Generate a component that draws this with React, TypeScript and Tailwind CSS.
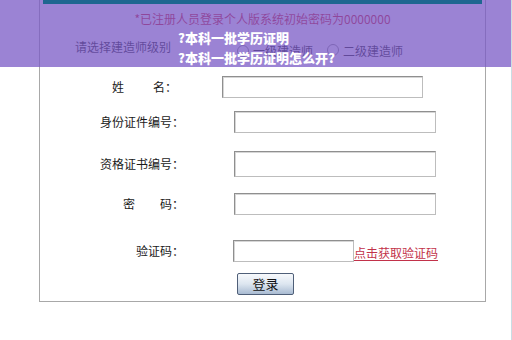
const font = "font-['Noto_Sans_CJK_SC','Noto_Sans_CJK_SC',sans-serif]"

function Field({ className }: { className: string }) {
  return (
    <div
      className={`h-[22px] border border-[#8f8f8f] border-r-[#bdbdbd] border-b-[#bdbdbd] bg-white shadow-[inset_1px_1px_0_#d6d6d6] ${className}`}
    />
  )
}

function Radio() {
  return (
    <span className="inline-block h-[12px] w-[12px] rounded-full border border-[#8a8a8a] bg-white" />
  )
}

export default function App() {
  return (
    <div
      className={`relative h-[340px] w-[512px] overflow-hidden border-r border-[#c9dde4] bg-white text-[12px] leading-[16px] text-[#1a1a1a] ${font}`}
    >
      <div className="flex">
        <div className="w-[39px] shrink-0" />
        <div className="flex h-[302px] w-[447px] shrink-0 flex-col border-x border-b border-[#a8a8a8]">
          <div className="relative z-20 mx-[3px] h-[4px] bg-[#1f6690]" />

          <p className="mt-[7px] text-center text-[#d0101c]">
            *已注册人员登录个人版系统初始密码为0000000
          </p>

          <div className="mt-[12px] flex items-start">
            <span className="ml-[35px]">请选择建造师级别</span>
            <div className="ml-[66px] mt-[4px] flex items-center">
              <Radio />
              <span className="ml-[4px]">一级建造师</span>
              <span className="ml-[14px]">
                <Radio />
              </span>
              <span className="ml-[4px]">二级建造师</span>
            </div>
          </div>

          <div className="mt-[17px] flex h-[22px] items-center">
            <span className="w-[137px] text-right">
              姓<span className="ml-[29px]">名：</span>
            </span>
            <Field className="ml-[45px] w-[201px]" />
          </div>

          <div className="mt-[13px] flex h-[22px] items-center">
            <span className="w-[144px] text-right">身份证件编号：</span>
            <Field className="ml-[50px] w-[202px]" />
          </div>

          <div className="mt-[18px] flex h-[26px] items-center">
            <span className="w-[144px] text-right">资格证书编号：</span>
            <Field className="ml-[50px] !h-[26px] w-[202px]" />
          </div>

          <div className="mt-[16px] flex h-[22px] items-center">
            <span className="w-[144px] text-right">
              密<span className="ml-[25px]">码：</span>
            </span>
            <Field className="ml-[50px] w-[202px]" />
          </div>

          <div className="mt-[25px] flex h-[22px] items-center">
            <span className="w-[144px] text-right">验证码：</span>
            <Field className="ml-[49px] w-[121px]" />
            <a className="mt-[4px] text-[#c2324a] underline underline-offset-2">
              点击获取验证码
            </a>
          </div>

          <div className="mt-[11px] flex h-[22px]">
            <button
              type="button"
              className="ml-[197px] h-[22px] w-[57px] rounded-[2px] border border-[#4f5f78] bg-gradient-to-b from-[#f7f9fc] via-[#dde6f0] to-[#a9bbd2] text-[13px] leading-[18px] text-[#111]"
            >
              登录
            </button>
          </div>
        </div>
      </div>

      <div className="absolute left-0 top-0 z-10 h-[67px] w-[512px] bg-[#7a5ac6]/75" />
      <div className="absolute left-[178px] top-[28px] z-30 text-[13px] font-black leading-[20px] text-white">
        <p>?本科一批学历证明</p>
        <p>?本科一批学历证明怎么开?</p>
      </div>
    </div>
  )
}
